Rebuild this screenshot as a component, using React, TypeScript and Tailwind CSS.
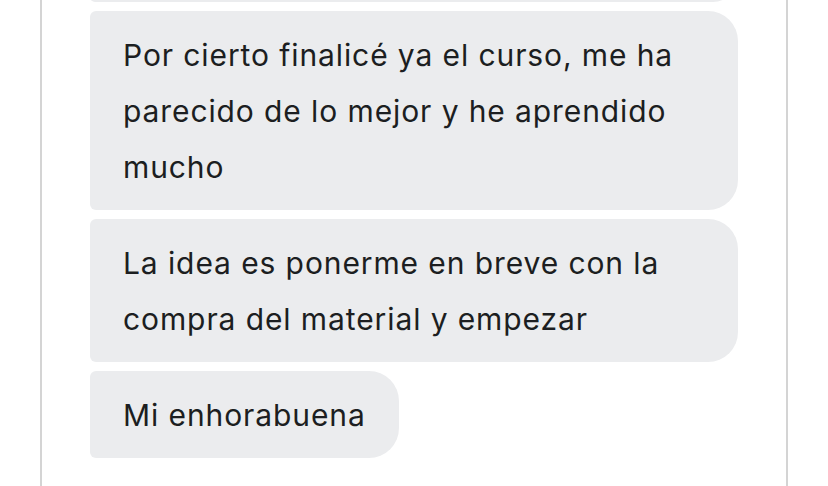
import React from "react";

const Bubble = ({ children, className = "" }: { children: React.ReactNode; className?: string }) => (
  <div
    className={`bg-[#ebecee] text-[#1c1e21] rounded-l-[6px] rounded-r-[30px] px-[33px] py-[15.5px] text-[30px] tracking-[0.9px] leading-[56px] ${className}`}
  >
    {children}
  </div>
);

export default function App() {
  return (
    <div className="w-[828px] h-[486px] bg-white overflow-hidden" style={{ fontFamily: "Inter, 'Noto Sans', sans-serif" }}>
      <div className="ml-[40px] w-[748px] h-full border-x-2 border-[#d4d4d4] pl-[48px] flex flex-col">
        <div className="flex flex-col items-start gap-[9px] mt-[-48px]">
          <div className="bg-[#ebecee] rounded-l-[6px] rounded-r-[30px] w-[648px] h-[50px]" />
          <Bubble className="w-[648px]">
            Por cierto finalicé ya el curso, me ha parecido de lo mejor y he aprendido mucho
          </Bubble>
          <Bubble className="w-[648px]">
            La idea es ponerme en breve con la compra del material y empezar
          </Bubble>
          <Bubble>Mi enhorabuena</Bubble>
        </div>
      </div>
    </div>
  );
}
